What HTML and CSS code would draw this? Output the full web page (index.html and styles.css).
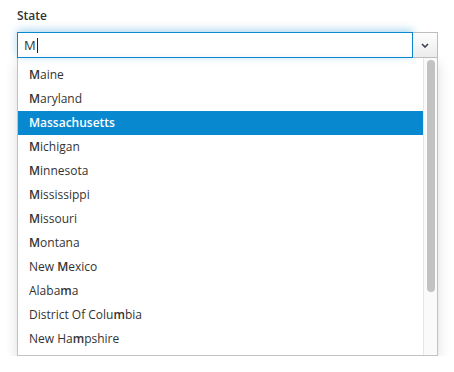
FILE: index.html
```html
<!DOCTYPE html>
<html lang="en">
<head>
    <meta charset="UTF-8">
    <meta name="viewport" content="width=device-width, initial-scale=1.0">
    <title>State</title>
    <link rel="stylesheet" href="styles.css">
</head>
<body>
    <div class="field">
        <label class="field-label" for="state-input">State</label>

        <div class="combo">
            <div class="combo-input" id="state-input">M<span class="caret"></span></div>
            <button class="combo-toggle" type="button">
                <svg width="8" height="5" viewBox="0 0 8 5">
                    <path d="M1 1 L4 4 L7 1" fill="none" stroke="#3a4150" stroke-width="1.6"/>
                </svg>
            </button>
        </div>

        <div class="combo-list">
            <ul class="options">
                <li><b>M</b>aine</li>
                <li><b>M</b>aryland</li>
                <li class="selected">Massachusetts</li>
                <li><b>M</b>ichigan</li>
                <li><b>M</b>innesota</li>
                <li><b>M</b>ississippi</li>
                <li><b>M</b>issouri</li>
                <li><b>M</b>ontana</li>
                <li>New <b>M</b>exico</li>
                <li>Alaba<b>m</b>a</li>
                <li>District Of Colu<b>m</b>bia</li>
                <li>New Ha<b>m</b>pshire</li>
            </ul>
            <div class="scroll-track">
                <div class="scroll-thumb"></div>
            </div>
        </div>
    </div>
</body>
</html>
```

FILE: styles.css
```css
body {
    font-family: 'Open Sans', 'Liberation Sans', sans-serif;
    color: #333;
    background-color: #fff;
    margin: 0;
    padding: 8px 0 0 17px;
}

.field {
    width: 421px;
}

.field-label {
    display: block;
    font-size: 12px;
    font-weight: 600;
    line-height: 16px;
    margin-bottom: 8px;
}

.combo {
    display: flex;
    height: 26px;
}

.combo-input {
    flex: 1;
    box-sizing: border-box;
    height: 26px;
    border: 1px solid #0a88cf;
    box-shadow: 0 -2px 8px rgba(10, 136, 207, 0.35);
    padding-left: 6px;
    font-size: 13px;
    line-height: 24px;
    display: flex;
    align-items: center;
}

.caret {
    display: inline-block;
    width: 1px;
    height: 15px;
    background-color: #222;
    margin-left: 1px;
}

.combo-toggle {
    width: 25px;
    height: 26px;
    padding: 0;
    border: 1px solid #bdbdbd;
    border-left: none;
    background: linear-gradient(#fdfdfd, #ececec);
    display: flex;
    align-items: center;
    justify-content: center;
}

.combo-list {
    display: flex;
    height: 298px;
    box-sizing: border-box;
    border: 1px solid #c2c2c2;
    border-top: none;
    box-shadow: 0 5px 12px rgba(0, 0, 0, 0.14);
}

.options {
    flex: 1;
    list-style: none;
    margin: 0;
    padding: 5px 0 0 0;
}

.options li {
    height: 24px;
    line-height: 24px;
    font-size: 12px;
    padding-left: 11px;
    white-space: nowrap;
}

.options b {
    font-weight: 600;
}

.options li.selected {
    background-color: #0888cf;
    color: #fff;
    font-weight: 600;
}

.scroll-track {
    width: 13px;
    border-left: 1px solid #e6e6e6;
    background-color: #fafafa;
    padding: 2px 0 0 3px;
    box-sizing: border-box;
    width: 14px;
}

.scroll-thumb {
    width: 8px;
    height: 232px;
    border-radius: 4px;
    background-color: #c2c2c2;
}
```
